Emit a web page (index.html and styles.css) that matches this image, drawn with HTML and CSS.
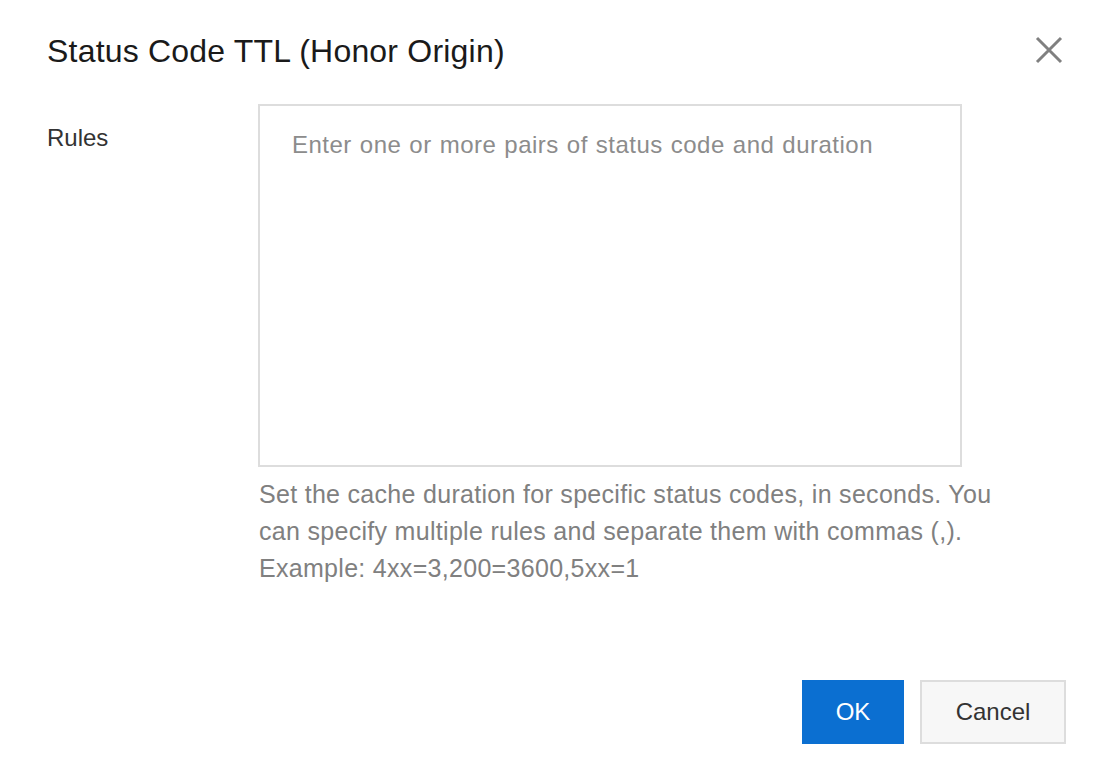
FILE: index.html
```
<!DOCTYPE html>
<html lang="en">
<head>
<meta charset="utf-8">
<title>Status Code TTL</title>
<link rel="stylesheet" href="styles.css">
</head>
<body>
<div class="dialog">
  <div class="dialog-header">
    <h1 class="dialog-title">Status Code TTL (Honor Origin)</h1>
    <button class="close-btn" aria-label="Close">
      <svg width="28" height="28" viewBox="0 0 28 28"><path d="M2 2 L26 26 M26 2 L2 26" stroke="#808080" stroke-width="3" fill="none"/></svg>
    </button>
  </div>
  <div class="dialog-body">
    <div class="form-row">
      <label class="form-label">Rules</label>
      <div class="form-control">
        <textarea class="rules-input" placeholder="Enter one or more pairs of status code and duration"></textarea>
        <p class="help">Set the cache duration for specific status codes, in seconds. You can specify multiple rules and separate them with commas (,). Example: 4xx=3,200=3600,5xx=1</p>
      </div>
    </div>
  </div>
  <div class="dialog-footer">
    <button class="btn btn-primary">OK</button>
    <button class="btn btn-default">Cancel</button>
  </div>
</div>
</body>
</html>
```
FILE: styles.css
```
html, body {
  margin: 0;
  padding: 0;
  background: #ffffff;
}
body {
  font-family: "Liberation Sans", Arial, sans-serif;
  width: 1112px;
  height: 774px;
  overflow: hidden;
}
.dialog {
  display: flex;
  flex-direction: column;
  height: 774px;
  box-sizing: border-box;
  padding: 0 46px 0 47px;
}
.dialog-header {
  display: flex;
  justify-content: space-between;
  align-items: flex-start;
  padding-top: 31px;
}
.dialog-title {
  margin: 0;
  font-size: 32px;
  line-height: 40px;
  letter-spacing: 0.2px;
  font-weight: 400;
  color: #1a1a1a;
}
.close-btn {
  border: 0;
  background: none;
  padding: 0;
  margin: 5px 3px 0 0;
  width: 28px;
  height: 28px;
  cursor: pointer;
}
.close-btn svg { display: block; }
.dialog-body {
  padding-top: 33px;
  flex: 1;
}
.form-row {
  display: flex;
}
.form-label {
  width: 211px;
  flex: none;
  padding-top: 18px;
  font-size: 24px;
  line-height: 32px;
  color: #333333;
}
.form-control {
  width: 745px;
}
.rules-input {
  display: block;
  box-sizing: border-box;
  width: 704px;
  height: 363px;
  border: 2px solid #dddddd;
  padding: 23px 32px;
  font-family: "Liberation Sans", Arial, sans-serif;
  font-size: 24px;
  line-height: 32px;
  letter-spacing: 0.5px;
  word-spacing: 0.8px;
  resize: none;
  outline: none;
  margin: 0;
}
.rules-input::placeholder {
  color: #8c8c8c;
}
.help {
  margin: 9px 0 0 1px;
  font-size: 25px;
  line-height: 37px;
  letter-spacing: 0.3px;
  color: #808080;
}
.dialog-footer {
  display: flex;
  justify-content: flex-end;
  gap: 16px;
  padding-bottom: 30px;
}
.btn {
  height: 64px;
  box-sizing: border-box;
  font-family: "Liberation Sans", Arial, sans-serif;
  font-size: 24px;
  padding: 0;
  cursor: pointer;
}
.btn-primary {
  width: 102px;
  background: #0b6fd1;
  color: #ffffff;
  border: 0;
}
.btn-default {
  width: 146px;
  background: #f7f7f7;
  color: #333333;
  border: 2px solid #dddddd;
}
```
